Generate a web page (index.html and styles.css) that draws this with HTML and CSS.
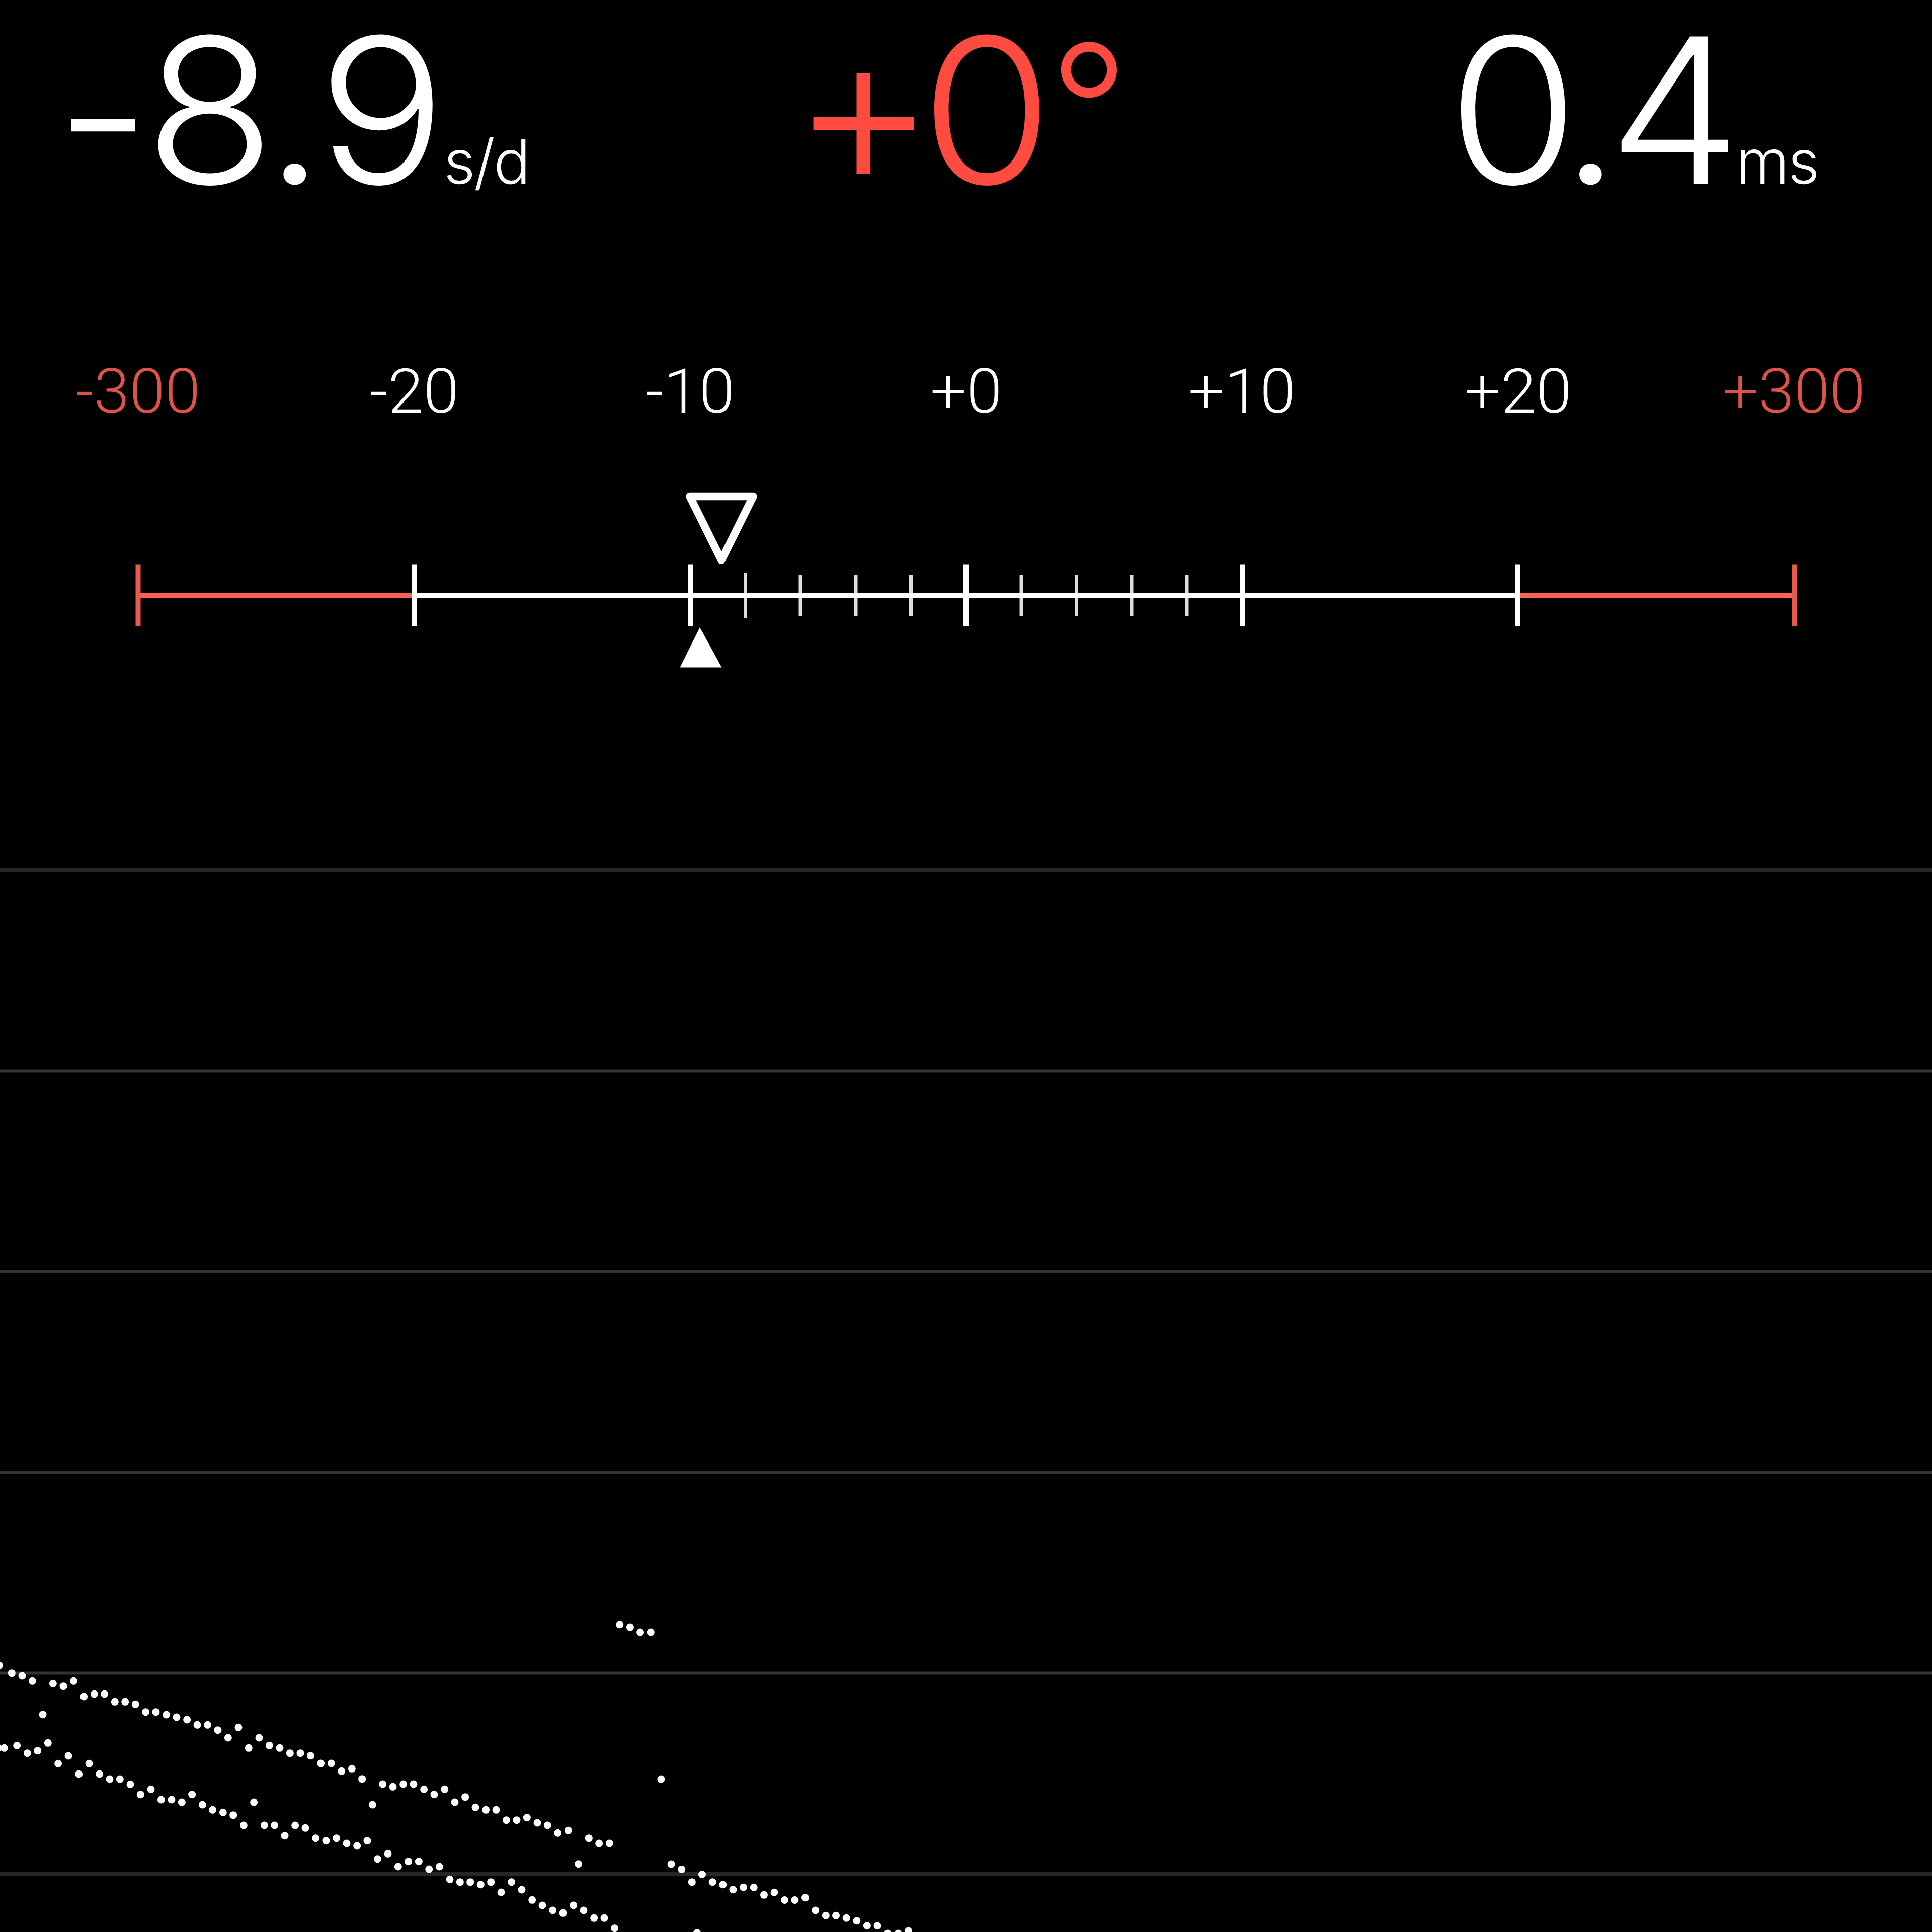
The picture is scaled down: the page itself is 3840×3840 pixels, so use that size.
FILE: index.html
```html
<!DOCTYPE html>
<html lang="en">
<head>
<meta charset="utf-8">
<title>Timegrapher</title>
<link rel="stylesheet" href="styles.css">
</head>
<body>
<main class="screen">
  <header class="readings">
    <div class="reading rate"><span class="minus">-</span><span class="value">8.9</span><span class="unit">s/d</span></div>
    <div class="reading amplitude"><span class="plus">+</span><span class="value">0</span><span class="degree">°</span></div>
    <div class="reading beat"><span class="value">0.4</span><span class="unit">ms</span></div>
  </header>

  <div class="labels">
    <span class="label limit">-300</span>
    <span class="label">-20</span>
    <span class="label">-10</span>
    <span class="label">+0</span>
    <span class="label">+10</span>
    <span class="label">+20</span>
    <span class="label limit">+300</span>
  </div>

  <svg class="gauge" viewBox="0 858 3840 542">
    <path class="axis out" d="M274 1183.5H823M3017 1183.5H3566"/>
    <path class="tick out" d="M274.5 1121.5V1244.5M3566 1121.5V1244.5"/>
    <path class="axis" d="M823 1183.5H3017"/>
    <path class="tick" d="M823 1121.5V1244.5M1372 1121.5V1244.5M1920 1121.5V1244.5M2469 1121.5V1244.5M3017 1121.5V1244.5"/>
    <path class="minor" d="M1481.5 1139V1228M1591 1142V1224.5M1701 1142V1224.5M1810.5 1142V1224.5M2030 1142V1224.5M2139.5 1142V1224.5M2249 1142V1224.5M2359 1142V1224.5"/>
    <path class="axis" d="M1372 1183.5H2469"/>
    <path class="needle" d="M1371 986.5H1497L1434 1113.5Z"/>
    <path class="average" d="M1391 1247L1434.5 1326.5H1351.5Z"/>
  </svg>

  <svg class="trace" viewBox="0 1400 3840 2440">
    <path class="grid soft" d="M0 1730H3840M0 3724.5H3840"/>
    <path class="grid" d="M0 2128.5H3840M0 2527.5H3840M0 2926.5H3840M0 3325.5H3840"/>
    <g class="dots" transform="translate(0 3270) scale(.33333)">
      <path d="M-5 121h0M70 167h0M132 183h0M193 214h0M255 413h0M316 229h0M378 245h0M439 214h0M500 306h0M562 291h0M623 291h0M685 337h0M746 337h0M808 352h0M869 398h0M930 398h0M992 414h0M1053 429h0M1115 444h0M1176 475h0M1238 475h0M1299 506h0M1360 552h0M1422 490h0"/>
      <path d="M-10 613h0M25 613h0M101 598h0M163 644h0M224 629h0M286 583h0M347 706h0M408 660h0M470 768h0M531 706h0M593 768h0M654 798h0M715 798h0M777 829h0M838 890h0M900 859h0M961 921h0M1023 921h0M1084 936h0M1145 890h0M1207 951h0M1268 982h0M1330 997h0M1391 1013h0"/>
    </g>
    <g class="dots" transform="translate(400 3370) scale(.33333)">
      <path d="M283 313h0M345 252h0M406 298h0M468 313h0M529 344h0M591 344h0M652 359h0M713 405h0M775 405h0M836 451h0M898 436h0M959 497h0M1021 651h0M1082 528h0M1143 544h0M1205 528h0M1266 528h0M1328 559h0M1389 590h0"/>
      <path d="M253 774h0M314 636h0M376 774h0M437 774h0M498 836h0M560 774h0M621 790h0M683 851h0M744 866h0M806 851h0M867 882h0M929 897h0M990 866h0M1051 974h0M1113 943h0M1174 1020h0M1235 989h0M1297 989h0M1358 1035h0"/>
    </g>
    <g class="dots" transform="translate(800 3480) scale(.33333)">
      <path d="M251 229h0M312 306h0M374 275h0M435 337h0M497 352h0M558 352h0M619 413h0M681 413h0M742 398h0M804 429h0M865 444h0M926 490h0M988 475h0M1049 674h0M1111 521h0M1172 552h0M1234 552h0"/>
      <path d="M220 690h0M282 766h0M343 782h0M404 782h0M466 797h0M527 782h0M588 843h0M650 782h0M711 828h0M773 889h0M834 921h0M896 951h0M957 967h0M1019 921h0M1080 951h0M1142 997h0M1203 997h0M1265 1058h0"/>
    </g>
    <g class="dots" transform="translate(1180 3180) scale(.42092)">
      <path d="M123 116h0M172 128h0M220 152h0M269 152h0M318 846h0M366 1247h0M415 1272h0M464 1332h0M512 1296h0M561 1332h0M610 1344h0M658 1368h0M707 1357h0M756 1357h0M804 1393h0M853 1381h0M902 1417h0M950 1417h0M999 1406h0M1047 1466h0M1096 1490h0M1144 1490h0M1193 1502h0M1242 1515h0M1291 1539h0M1340 1539h0M1388 1575h0M1437 1575h0M1486 1563h0"/>
      <path d="M488 1573h0"/>
    </g>
  </svg>
</main>
</body>
</html>
```
FILE: styles.css
```css
body {
  margin: 0;
  background: #000;
  color: #fff;
}

.screen {
  display: flex;
  flex-direction: column;
  width: 3840px;
  height: 3840px;
}

.readings {
  display: grid;
  grid-template-columns: 1186px 1460px 1fr;
  height: 698px;
  font: 300 402px/438px Inter, "Liberation Sans", sans-serif;
}

.reading {
  display: flex;
  justify-content: center;
  align-items: baseline;
  height: 438px;
  white-space: nowrap;
}

.value {
  letter-spacing: -11px;
}

.unit {
  font-size: 122px;
  letter-spacing: -3px;
}

.rate .minus {
  margin: 0 20px 0 -20px;
  transform: translateY(9px) scaleX(1.04);
}

.rate .value {
  margin: 0 -3px 0 3px;
  transform: scaleX(1.057);
  transform-origin: right;
}

.rate .unit {
  margin-left: 9px;
}

.amplitude {
  color: #ff4b40;
}

.amplitude .plus {
  transform: translate(10px, -8px) scale(1.1);
}

.amplitude .value {
  transform: scaleX(1.06);
}

.amplitude .degree {
  transform: translate(-2px, -6px) scale(.87);
}

.beat .value {
  margin: 0 35px 0 4px;
  letter-spacing: -24px;
  transform: scaleX(1.05);
  transform-origin: left;
}

.beat .unit {
  margin-left: 6px;
}

.labels {
  display: grid;
  grid-template-columns: repeat(7, 1fr);
  height: 160px;
  font: 300 123px/160px Roboto, "Liberation Sans", sans-serif;
  text-align: center;
}

.label {
  transform: scaleX(1.035);
}

.limit {
  color: #dd5347;
}

.gauge,
.trace {
  display: block;
  width: 3840px;
}

.gauge {
  height: 542px;
}

.trace {
  height: 2440px;
}

.axis,
.tick,
.minor {
  fill: none;
  stroke: #fff;
  stroke-width: 11px;
}

.tick {
  stroke-width: 10px;
}

.minor {
  stroke: #dedede;
  stroke-width: 7px;
}

.axis.out {
  stroke: #fb6156;
}

.tick.out {
  stroke: #e95a4e;
}

.needle {
  fill: none;
  stroke: #fff;
  stroke-width: 15.5px;
  stroke-linejoin: round;
}

.average {
  fill: #fff;
}

.grid {
  fill: none;
  stroke: #333;
  stroke-width: 6px;
}

.grid.soft {
  stroke: #272727;
  stroke-width: 8px;
}

.dots path {
  fill: none;
  stroke: #fff;
  stroke-width: 15px;
  stroke-linecap: round;
  vector-effect: non-scaling-stroke;
}
```
